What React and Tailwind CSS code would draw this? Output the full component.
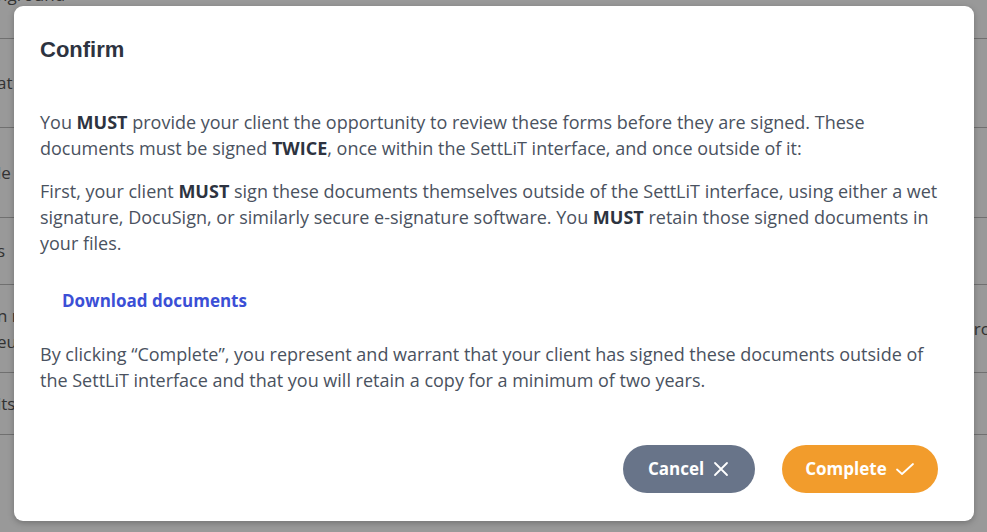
import React from "react";

const rows = [
  { h: 39, left: "nground", right: "", align: "items-end pb-[30px]" },
  { h: 89, left: "at", right: "" },
  { h: 90, left: "le", right: "" },
  { h: 67, left: "s", right: "" },
  { h: 88, left: "n r", left2: "eu", right: "ro" },
  { h: 62, left: "its", right: "" },
];

export default function App() {
  return (
    <div className="relative w-[987px] h-[532px] overflow-hidden bg-white" style={{ fontFamily: "'Open Sans', sans-serif" }}>
      {/* background table */}
      <div className="flex flex-col">
        {rows.map((r, i) => (
          <div key={i} className={`flex justify-between border-b border-[#bbb] text-[17px] text-[#555] ${r.align || "items-center"}`} style={{ height: r.h }}>
            <div className="flex flex-col leading-[26px] -ml-[3px]">
              <span>{r.left}</span>
              {r.left2 && <span>{r.left2}</span>}
            </div>
            <span className="-mr-[4px]">{r.right}</span>
          </div>
        ))}
      </div>
      <div className="absolute inset-0 bg-black/40" />
      {/* modal */}
      <div className="absolute left-[14px] top-[6px] w-[960px] h-[515px] bg-white rounded-[9px] shadow-[0_2px_6px_rgba(0,0,0,0.25)] flex flex-col pl-[26px] pr-[36px]">
        <h2 className="mt-[30px] text-[22px] leading-[28px] font-bold text-[#2d3340]" style={{ fontFamily: "'Liberation Sans', Arial, sans-serif" }}>
          Confirm
        </h2>
        <div className="mt-[45px] text-[18px] leading-[26px] text-[#4a5260] flex flex-col">
          <p>
            You <b className="text-[#2d3340]">MUST</b> provide your client the opportunity to review these forms before they are signed. These documents must be signed <b className="text-[#2d3340]">TWICE</b>, once within the SettLiT interface, and once outside of it:
          </p>
          <p className="mt-[17px]">
            First, your client <b className="text-[#2d3340]">MUST</b> sign these documents themselves outside of the SettLiT interface, using either a wet signature, DocuSign, or similarly secure e-signature software. You <b className="text-[#2d3340]">MUST</b> retain those signed documents in your files.
          </p>
          <a className="mt-[32px] ml-[22px] font-bold text-[#3b4fd6] text-[17px] leading-[26px]" href="#">Download documents</a>
          <p className="mt-[27px]">
            By clicking “Complete”, you represent and warrant that your client has signed these documents outside of the SettLiT interface and that you will retain a copy for a minimum of two years.
          </p>
        </div>
        <div className="mt-auto mb-[28px] flex justify-end gap-[27px]">
          <button className="h-[48px] w-[132px] rounded-full bg-[#687489] text-white font-bold text-[17px] flex items-center justify-center gap-[8px]">
            Cancel
            <svg width="18" height="18" viewBox="0 0 18 18" fill="none" stroke="white" strokeWidth="1.8" strokeLinecap="round"><path d="M3 3L15 15M15 3L3 15" /></svg>
          </button>
          <button className="h-[48px] w-[156px] rounded-full bg-[#f29c2c] text-white font-bold text-[17px] flex items-center justify-center gap-[8px]">
            Complete
            <svg width="20" height="16" viewBox="0 0 20 16" fill="none" stroke="white" strokeWidth="1.8" strokeLinecap="round" strokeLinejoin="round"><path d="M2 8.5L7 13L18 3" /></svg>
          </button>
        </div>
      </div>
    </div>
  );
}
